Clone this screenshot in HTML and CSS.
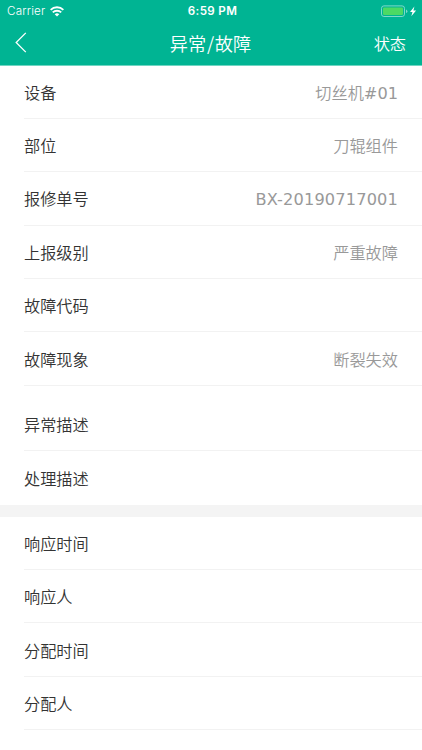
FILE: index.html
```
<!DOCTYPE html>
<html lang="zh-CN">
<head>
    <meta charset="UTF-8">
    <meta name="viewport" content="width=device-width, initial-scale=1.0">
    <title>异常/故障</title>
    <link rel="stylesheet" href="styles.css">
</head>
<body>
<header class="header">
    <div class="status-bar">
        <div class="carrier">
            <span>Carrier</span>
            <svg class="wifi" width="14" height="11" viewBox="0 0 14 11" fill="none" stroke="#fff" stroke-width="1.9">
                <path d="M0.6 3.9a9 9 0 0 1 12.8 0"/>
                <path d="M2.8 6.4a6 6 0 0 1 8.4 0"/>
                <path d="M7 10.6L4.7 8.3a3.3 3.3 0 0 1 4.6 0z" fill="#fff" stroke="none"/>
            </svg>
        </div>
        <div class="clock">6:59 PM</div>
        <div class="battery">
            <svg width="37" height="13" viewBox="0 0 37 13">
                <rect x="1.5" y="0.9" width="23" height="10.6" rx="2.4" fill="none" stroke="#7fd9c9"/>
                <rect x="3" y="2.4" width="20" height="7.6" rx="1.2" fill="#4cd964"/>
                <path d="M26 4.4q1.4 0.4 1.4 1.8t-1.4 1.8z" fill="#7fd9c9"/>
                <path d="M34.4 1.4l-4.4 5.5h2.5l-1.2 4.3 4.8-5.7h-2.7z" fill="#fff"/>
            </svg>
        </div>
    </div>
    <div class="nav-bar">
        <div class="back">
            <svg width="12" height="21" viewBox="0 0 12 21" fill="none" stroke="#fff" stroke-width="1.3">
                <path d="M10.8 0.9L1.2 10.5l9.6 9.6"/>
            </svg>
        </div>
        <div class="title">异常<span class="slash">/</span>故障</div>
        <div class="action">状态</div>
    </div>
</header>

<!-- Report info -->
<div class="group">
    <div class="row"><span class="label">设备</span><span class="value">切丝机<span class="latin">#01</span></span></div>
    <div class="row"><span class="label">部位</span><span class="value">刀辊组件</span></div>
    <div class="row"><span class="label">报修单号</span><span class="value number latin">BX-20190717001</span></div>
    <div class="row"><span class="label">上报级别</span><span class="value">严重故障</span></div>
    <div class="row"><span class="label">故障代码</span><span class="value"></span></div>
    <div class="row"><span class="label">故障现象</span><span class="value">断裂失效</span></div>
</div>

<!-- Descriptions -->
<div class="group description">
    <div class="row"><span class="label">异常描述</span></div>
    <div class="row last"><span class="label">处理描述</span></div>
</div>

<div class="divider"></div>

<!-- Response and assignment -->
<div class="group">
    <div class="row"><span class="label">响应时间</span><span class="value"></span></div>
    <div class="row"><span class="label">响应人</span><span class="value"></span></div>
    <div class="row"><span class="label">分配时间</span><span class="value"></span></div>
    <div class="row"><span class="label">分配人</span><span class="value"></span></div>
</div>
</body>
</html>
```
FILE: styles.css
```
body {
    margin: 0;
    background-color: #fff;
    color: #333;
    font-family: "DejaVu Sans", "Noto Sans CJK SC", sans-serif;
    font-size: 16.2px;
    font-weight: 350;
    overflow: hidden;
}

.header {
    box-sizing: border-box;
    height: 65.5px;
    border-bottom: 1px solid #6fd5c2;
    background-color: #00b493;
    color: #fff;
}

.status-bar {
    display: grid;
    grid-template-columns: 1fr auto 1fr;
    align-items: center;
    height: 22px;
    padding: 0 5px 0 7px;
    font-family: Inter, "Liberation Sans", sans-serif;
    font-size: 11.7px;
}

.carrier {
    display: flex;
    align-items: center;
    gap: 5px;
    letter-spacing: 0.15px;
}

.clock {
    padding-left: 1px;
    font-size: 11.6px;
    font-weight: 600;
    letter-spacing: 0.35px;
}

.battery {
    display: flex;
    justify-content: flex-end;
}

.nav-bar {
    display: grid;
    grid-template-columns: 1fr auto 1fr;
    align-items: center;
    height: 41px;
    padding: 0 16px 0 15px;
    font-family: "Noto Sans CJK SC", sans-serif;
}

.back {
    display: flex;
}

.title {
    font-size: 18.2px;
}

.slash {
    padding: 0 0.8px;
}

.action {
    text-align: right;
}

.group {
    padding-left: 24px;
}

.description {
    padding-top: 12px;
}

.row {
    display: flex;
    align-items: center;
    justify-content: space-between;
    box-sizing: border-box;
    height: 53.4px;
    padding-right: 24px;
    border-bottom: 1px solid #f2f2f2;
}

.last {
    border-bottom: none;
}

.value {
    color: #999;
}

.latin {
    font-weight: 400;
}

.number {
    padding-top: 2px;
    letter-spacing: 0.15px;
}

.divider {
    height: 12px;
    background-color: #f4f4f4;
}
```
